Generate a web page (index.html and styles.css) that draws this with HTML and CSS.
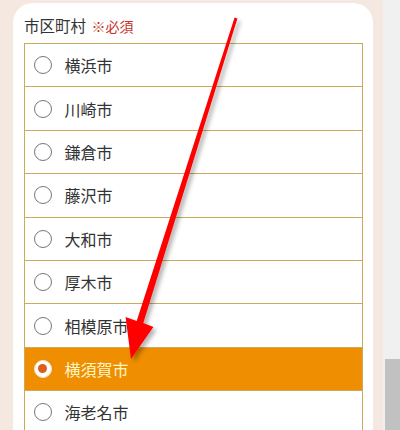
FILE: index.html
```html
<!DOCTYPE html>
<html lang="ja">
<head>
<meta charset="utf-8">
<link rel="stylesheet" href="styles.css">
</head>
<body>
<div class="page">
  <main class="main">
    <section class="card">
      <div class="label">市区町村 <span class="req">※必須</span></div>
      <ul class="list">
        <li class="item"><span class="radio"></span><span class="name">横浜市</span></li>
        <li class="item"><span class="radio"></span><span class="name">川崎市</span></li>
        <li class="item"><span class="radio"></span><span class="name">鎌倉市</span></li>
        <li class="item"><span class="radio"></span><span class="name">藤沢市</span></li>
        <li class="item"><span class="radio"></span><span class="name">大和市</span></li>
        <li class="item"><span class="radio"></span><span class="name">厚木市</span></li>
        <li class="item"><span class="radio"></span><span class="name">相模原市</span></li>
        <li class="item selected"><span class="radio"></span><span class="name">横須賀市</span></li>
        <li class="item"><span class="radio"></span><span class="name">海老名市</span></li>
      </ul>
    </section>
  </main>
  <div class="scrollbar">
    <div class="track-space"></div>
    <div class="thumb"></div>
  </div>
</div>
<svg class="arrow" width="400" height="430" viewBox="0 0 400 430">
  <defs>
    <filter id="sh" x="-20%" y="-20%" width="140%" height="140%">
      <feDropShadow dx="3" dy="3" stdDeviation="2" flood-color="#000" flood-opacity="0.3"/>
    </filter>
  </defs>
  <polygon filter="url(#sh)" fill="#ff0000" points="237.4,18.5 143.3,323.1 153.4,326.9 131,359 125.6,317.1 136.7,320.9 234.6,17.5"/>
</svg>
</body>
</html>
```

FILE: styles.css
```css
html, body {
  margin: 0;
  padding: 0;
  height: 430px;
  overflow: hidden;
}
body {
  font-family: "Noto Sans CJK JP", "Noto Sans", sans-serif;
  background: #f5e8e0;
  position: relative;
}
.page {
  display: flex;
  height: 430px;
}
.main {
  width: 383px;
  padding: 3px 10px 0 13px;
  box-sizing: border-box;
}
.card {
  background: #fff;
  border-radius: 20px 20px 0 0;
  padding: 11px 10px 0 11px;
  height: 600px;
}
.label {
  font-size: 15.5px;
  color: #333;
  line-height: 22px;
  height: 29px;
}
.req {
  color: #c8302a;
  font-size: 14px;
  margin-left: 2px;
}
.list {
  list-style: none;
  margin: 0;
  padding: 0;
  border: 1px solid #c9ab5b;
  border-bottom: none;
}
.item {
  height: 42.4px;
  border-bottom: 1px solid #c9ab5b;
  display: flex;
  align-items: center;
  padding-left: 8.5px;
  font-size: 16px;
  color: #333;
}
.radio {
  width: 18px;
  height: 18px;
  box-sizing: border-box;
  border: 1px solid #777;
  border-radius: 50%;
  background: #fff;
  margin-right: 13px;
  display: flex;
  align-items: center;
  justify-content: center;
}
.selected {
  background: #ee8e00;
  color: #fff6c8;
}
.selected .radio {
  border-color: #f6e4c8;
}
.selected .radio::after {
  content: "";
  width: 9px;
  height: 9px;
  border-radius: 50%;
  background: #d9601c;
}
.scrollbar {
  width: 17px;
  background: #f0f0f0;
  display: flex;
  flex-direction: column;
}
.track-space {
  height: 359px;
}
.thumb {
  margin-left: 2px;
  flex: 1;
  background: #c1c1c1;
}
.arrow {
  position: absolute;
  left: 0;
  top: 0;
  pointer-events: none;
}
```
